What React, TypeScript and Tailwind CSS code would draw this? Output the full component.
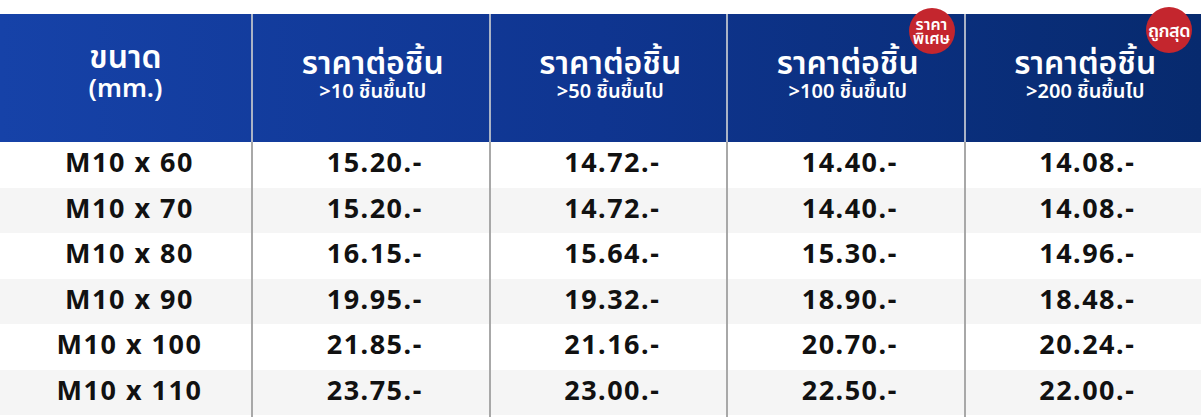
import React from "react";

const rows: string[][] = [
  ["M10 x 60", "15.20.-", "14.72.-", "14.40.-", "14.08.-"],
  ["M10 x 70", "15.20.-", "14.72.-", "14.40.-", "14.08.-"],
  ["M10 x 80", "16.15.-", "15.64.-", "15.30.-", "14.96.-"],
  ["M10 x 90", "19.95.-", "19.32.-", "18.90.-", "18.48.-"],
  ["M10 x 100", "21.85.-", "21.16.-", "20.70.-", "20.24.-"],
  ["M10 x 110", "23.75.-", "23.00.-", "22.50.-", "22.00.-"],
];

const font = { fontFamily: '"Noto Sans", "Noto Sans Thai", sans-serif' };

function PriceHead({ qty, badge }: { qty: string; badge?: React.ReactNode }) {
  return (
    <div className="relative flex flex-col items-center justify-center border-l-2 border-[#aab3c6] text-white pb-[10px] pl-[4px]">
      {badge}
      <div className="text-[32px] font-semibold leading-[36px]">ราคาต่อชิ้น</div>
      <div className="text-[20px] font-semibold leading-[22px]">{qty}</div>
    </div>
  );
}

export default function App() {
  return (
    <div className="w-[1201px] h-[417px] bg-white pt-[14px] overflow-hidden" style={font}>
      <div className="grid grid-cols-[251px_repeat(4,1fr)] h-[128px] bg-gradient-to-r from-[#1642a8] via-[#0f3590] to-[#072a6e]">
        <div className="flex flex-col items-center justify-center text-white pb-[14px]">
          <div className="text-[32px] font-semibold leading-[32px]">ขนาด</div>
          <div className="text-[26px] font-semibold leading-[30px]">(mm.)</div>
        </div>
        <PriceHead qty=">10 ชิ้นขึ้นไป" />
        <PriceHead qty=">50 ชิ้นขึ้นไป" />
        <PriceHead
          qty=">100 ชิ้นขึ้นไป"
          badge={
            <div className="absolute right-[9px] top-[-6px] w-[46px] h-[46px] rounded-full bg-[#c4262e] flex flex-col items-center justify-center text-[16px] font-semibold leading-[14px] text-white">
              <span>ราคา</span>
              <span>พิเศษ</span>
            </div>
          }
        />
        <PriceHead
          qty=">200 ชิ้นขึ้นไป"
          badge={
            <div className="absolute right-[9px] top-[-7px] w-[46px] h-[46px] rounded-full bg-[#c4262e] flex items-center justify-center text-[18px] font-semibold leading-[16px] text-white tracking-[-0.5px]">
              ถูกสุด
            </div>
          }
        />
      </div>
      {rows.map((r, i) => (
        <div
          key={i}
          className={`grid grid-cols-[251px_repeat(4,1fr)] h-[45.5px] ${i % 2 === 1 ? "bg-[#f5f5f5]" : "bg-white"}`}
        >
          {r.map((c, j) => (
            <div
              key={j}
              className={`flex items-center justify-center pb-[5px] pl-[8px] text-[27px] leading-[32px] font-bold text-[#111] tracking-[1.5px] ${j > 0 ? "border-l-2 border-[#a8a8a8]" : ""}`}
            >
              {c}
            </div>
          ))}
        </div>
      ))}
      <div className="grid grid-cols-[251px_repeat(4,1fr)] h-[2px]">
        <div />
        <div className="border-l-2 border-[#a8a8a8]" />
        <div className="border-l-2 border-[#a8a8a8]" />
        <div className="border-l-2 border-[#a8a8a8]" />
        <div className="border-l-2 border-[#a8a8a8]" />
      </div>
    </div>
  );
}
